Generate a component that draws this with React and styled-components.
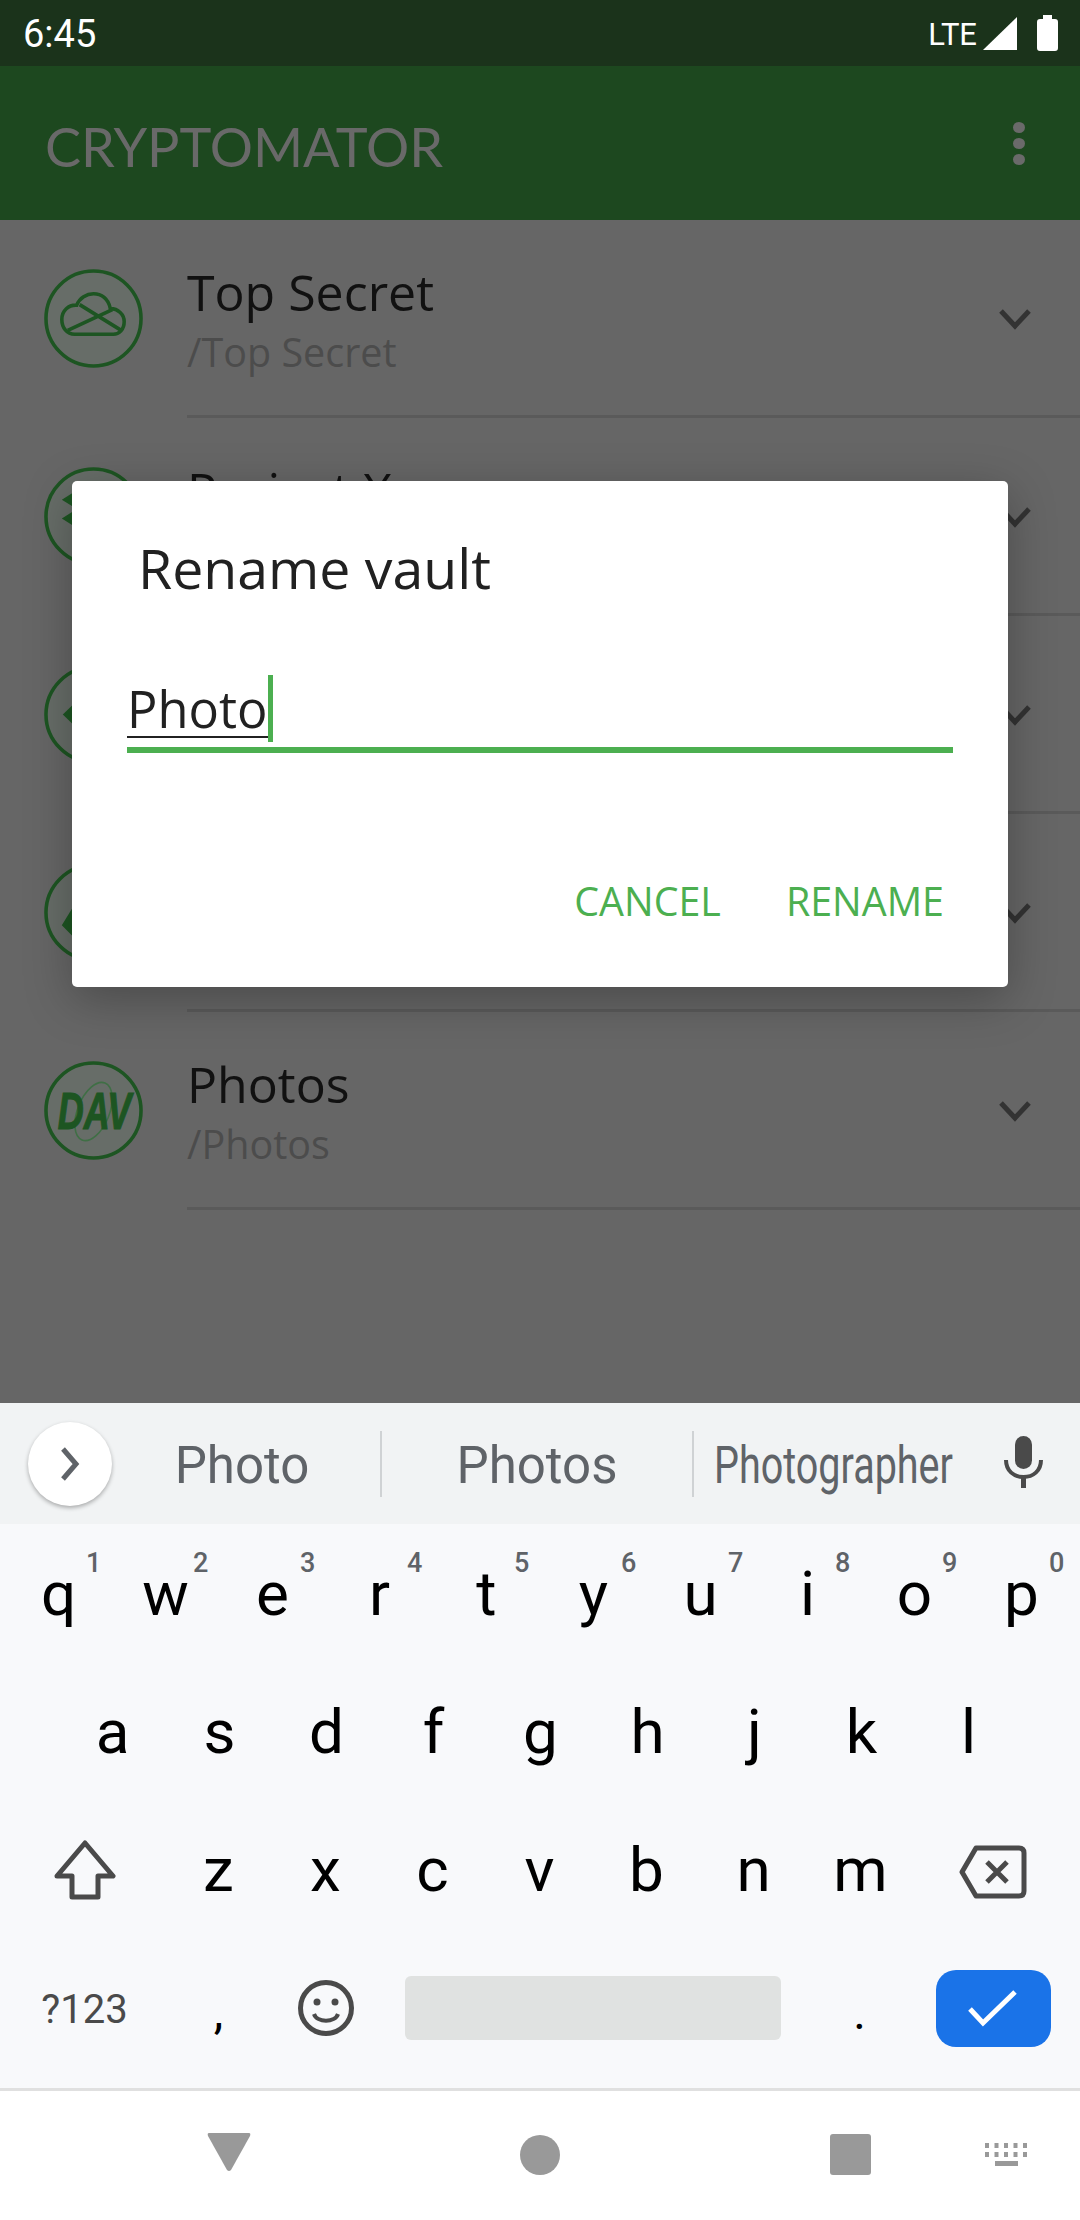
import styled, { createGlobalStyle } from "styled-components";

const Global = createGlobalStyle`
  html, body { margin: 0; padding: 0; background: #666; }
  * { box-sizing: border-box; }
`;

const Screen = styled.div`
  position: relative;
  width: 1080px;
  height: 2220px;
  overflow: hidden;
  display: flex;
  flex-direction: column;
  background: #666666;
  font-family: "Open Sans", sans-serif;
`;

const StatusBar = styled.div`
  height: 66px;
  flex: none;
  background: #1b331b;
  color: #fff;
  display: flex;
  align-items: center;
  padding: 0 22px 0 23px;
  font-family: Roboto, sans-serif;
`;
const Time = styled.span`
  font-size: 38px;
  font-weight: 400;
  flex: 1;
  margin-top: 2px;
`;
const Lte = styled.span`
  font-size: 31px;
  margin: 2px 6px 0 0;
`;

const Toolbar = styled.div`
  height: 154px;
  flex: none;
  background: #1d481f;
  display: flex;
  align-items: center;
  justify-content: space-between;
  padding: 0 55px 0 45px;
`;
const Brand = styled.h1`
  margin: 8px 0 0;
  font: 400 54px/1 Lato, sans-serif;
  color: #696969;
`;
const MoreDots = styled.div`
  display: flex;
  flex-direction: column;
  gap: 5px;
  span {
    width: 12px;
    height: 11px;
    border-radius: 50%;
    background: #6a6a6a;
  }
`;

const List = styled.div`
  height: 1183px;
  flex: none;
`;
const Row = styled.div`
  height: 198px;
  display: flex;
  align-items: stretch;
`;
const VaultIcon = styled.svg`
  width: 99px;
  height: 99px;
  margin: 49px 44px 0 44px;
  flex: none;
  overflow: visible;
`;
const RowBody = styled.div`
  flex: 1;
  display: flex;
  align-items: center;
  justify-content: space-between;
  padding-right: 48px;
  border-bottom: 3px solid #5a5a5a;
`;
const RowText = styled.div`
  margin-top: 5px;
`;
const RowTitle = styled.div`
  font-size: 50px;
  line-height: 60px;
  color: #111;
`;
const RowPath = styled.div`
  font-size: 39.5px;
  line-height: 54px;
  min-height: 54px;
  margin-top: 3px;
  color: #4c4c4c;
`;
const Chevron = styled.svg`
  width: 34px;
  height: 22px;
  margin-top: 2px;
`;

const Dialog = styled.div`
  position: absolute;
  left: 72px;
  top: 481px;
  width: 936px;
  height: 506px;
  background: #fff;
  border-radius: 5px;
  box-shadow: 0 12px 48px rgba(0, 0, 0, 0.28);
  padding: 51px 55px 0;
`;
const DialogTitle = styled.h2`
  margin: 0 0 0 11px;
  font-size: 55.4px;
  line-height: 72px;
  font-weight: 400;
  color: #212121;
`;
const Field = styled.div`
  margin-top: 68px;
  height: 81px;
  border-bottom: 6px solid #4caf50;
  display: flex;
  align-items: flex-start;
`;
const FieldText = styled.span`
  font-size: 50.6px;
  line-height: 62px;
  height: 66px;
  padding: 6px 1px 0 0;
  color: #212121;
  border-bottom: 2px solid #212121;
`;
const Caret = styled.span`
  width: 5px;
  height: 67px;
  margin-top: 3px;
  background: #4caf50;
`;
const DialogActions = styled.div`
  display: flex;
  justify-content: flex-end;
  gap: 65px;
  margin-top: 123px;
  padding-right: 9px;
`;
const DialogButton = styled.span`
  font-size: 39.4px;
  line-height: 50px;
  color: #4caf50;
`;

const Keyboard = styled.div`
  height: 685px;
  flex: none;
  background: #f8f9fb;
`;
const SuggestStrip = styled.div`
  position: relative;
  height: 121px;
  background: #f1f3f4;
  display: flex;
  align-items: center;
  font-family: Roboto, sans-serif;
  font-size: 51px;
  color: #5f6368;
`;
const ExpandButton = styled.div`
  width: 84px;
  height: 84px;
  border-radius: 50%;
  margin-left: 28px;
  background: #fff;
  box-shadow: 0 2px 4px rgba(0, 0, 0, 0.3);
  display: flex;
  align-items: center;
  justify-content: center;
  flex: none;
`;
const Suggestion = styled.div`
  width: ${(p) => p.$w}px;
  height: 66px;
  line-height: 70px;
  text-align: ${(p) => (p.$left ? "left" : "center")};
  padding-left: ${(p) => (p.$left ? 20 : 0)}px;
  padding-right: ${(p) => p.$shift || 0}px;
  flex: none;
  border-right: ${(p) => (p.$sep ? "2px solid #cfd2d4" : "none")};
`;
const Squeezed = styled.span`
  display: inline-block;
  transform: scaleX(0.775);
  transform-origin: left center;
  white-space: nowrap;
`;
const MicIcon = styled.svg`
  position: absolute;
  left: 1004px;
  top: 33px;
  width: 39px;
  height: 52px;
`;

const KeyRows = styled.div`
  padding: 1px 3px 0 5px;
`;
const KeyRow = styled.div`
  height: 138px;
  display: grid;
  grid-template-columns: ${(p) => p.$cols};
  padding-left: ${(p) => p.$pad || 0}px;
  margin-left: ${(p) => p.$back || 0}px;
  align-items: center;
  justify-items: center;
`;
const Key = styled.div`
  position: relative;
  width: 100%;
  text-align: center;
  font-family: Roboto, sans-serif;
  font-size: ${(p) => p.$size || 62}px;
  line-height: 70px;
  margin-top: ${(p) => p.$mt || 0}px;
  color: #000;
`;
const Digit = styled.span`
  position: absolute;
  left: 81px;
  top: -9px;
  font-size: 27px;
  line-height: 27px;
  font-weight: 500;
  color: #5f6368;
`;
const SymbolKey = styled.div`
  font-family: Roboto, sans-serif;
  font-size: 40px;
  color: #4a4a4a;
  margin-top: 3px;
`;
const SpaceBar = styled.div`
  width: 376px;
  height: 64px;
  border-radius: 6px;
  background: #e0e2e1;
`;
const EnterKey = styled.div`
  width: 115px;
  height: 77px;
  border-radius: 20px;
  background: #1a73e8;
  margin-right: 3px;
  display: flex;
  align-items: center;
  justify-content: center;
`;
const KeyIcon = styled.svg`
  display: block;
  margin-top: ${(p) => p.$mt || 0}px;
  margin-right: ${(p) => p.$mr || 0}px;
`;

const NavBar = styled.div`
  position: relative;
  height: 132px;
  flex: none;
  background: #fff;
  border-top: 3px solid #e0e0e0;
  display: flex;
  align-items: center;
  padding-left: 207px;
`;
const BackButton = styled.svg`
  width: 44px;
  height: 40px;
  margin-right: 269px;
  margin-top: -8px;
`;
const HomeButton = styled.div`
  width: 40px;
  height: 40px;
  border-radius: 50%;
  background: #999;
  margin-right: 270px;
  margin-top: -1px;
`;
const RecentButton = styled.div`
  width: 41px;
  height: 41px;
  border-radius: 3px;
  background: #999;
  margin-top: -3px;
`;
const KeyboardHide = styled.svg`
  position: absolute;
  left: 985px;
  top: 52px;
  width: 43px;
  height: 23px;
`;

const OneDrive = () => (
  <g fill="none" stroke="#1d5522" strokeWidth="3.6">
    <path d="M31 66C23 66 18 59 18 51 18 42 25 36 33 36.5 36 29 43 25 50 25 58 25 65 30 67 40 75 40 81 46 81 53 81 61 76 66 70 66Z" />
    <path d="M36 36 78 62M24 62 69 41" />
  </g>
);
const Dropbox = () => (
  <path fill="#1d5522" d="M18 33 34 23 50 33 34 43ZM18 52 34 42 50 52 34 62ZM50 33 66 23 82 33 66 43ZM50 52 66 42 82 52 66 62ZM34 66 50 56 66 66 50 76Z" />
);
const Diamond = () => <path fill="#1d5522" d="M19 50 50 20 81 50 50 80Z" />;
const Drive = () => <path fill="#1d5522" d="M18 63 40 27H60L82 63 71 74H29ZM36 60H64L50 37Z" />;
const Dav = () => (
  <g>
    <ellipse cx="50" cy="51" rx="16" ry="31" transform="rotate(22 50 51)" fill="none" stroke="#3f6f45" strokeWidth="1.6" />
    <text x="14" y="69" fontFamily="Liberation Sans, sans-serif" fontWeight="700" fontStyle="italic" fontSize="52" textLength="74" lengthAdjust="spacingAndGlyphs" fill="#1d5522" stroke="#1d5522" strokeWidth="1.2">DAV</text>
  </g>
);

const vaults = [
  { icon: <OneDrive />, title: "Top Secret", path: "/Top Secret" },
  { icon: <Dropbox />, title: "Project X", path: "" },
  { icon: <Diamond />, title: "", path: "" },
  { icon: <Drive />, title: "", path: "" },
  { icon: <Dav />, title: "Photos", path: "/Photos" },
];

const digits = ["1", "2", "3", "4", "5", "6", "7", "8", "9", "0"];

const App = () => (
  <Screen>
    <Global />
    <StatusBar>
      <Time>6:45</Time>
      <Lte>LTE</Lte>
      <svg width="34" height="33" viewBox="0 0 34 33" style={{ marginRight: 20 }}>
        <path d="M34 0V33H0Z" fill="#fff" />
      </svg>
      <svg width="21" height="36" viewBox="0 0 21 36">
        <path d="M6 0H15V4H18Q21 4 21 7V33Q21 36 18 36H3Q0 36 0 33V7Q0 4 3 4H6Z" fill="#fff" />
      </svg>
    </StatusBar>
    <Toolbar>
      <Brand>CRYPTOMATOR</Brand>
      <MoreDots>
        <span />
        <span />
        <span />
      </MoreDots>
    </Toolbar>
    <List>
      {vaults.map((v, i) => (
        <Row key={i}>
          <VaultIcon viewBox="0 0 100 100">
            <circle cx="50" cy="50" r="48" fill="#676d68" stroke="#1d5522" strokeWidth="3.6" />
            {v.icon}
          </VaultIcon>
          <RowBody>
            <RowText>
              <RowTitle>{v.title}</RowTitle>
              <RowPath>{v.path}</RowPath>
            </RowText>
            <Chevron viewBox="0 0 34 22">
              <path d="M3 3 17 18 31 3" fill="none" stroke="#333" strokeWidth="5" />
            </Chevron>
          </RowBody>
        </Row>
      ))}
    </List>
    <Dialog>
      <DialogTitle>Rename vault</DialogTitle>
      <Field>
        <FieldText>Photo</FieldText>
        <Caret />
      </Field>
      <DialogActions>
        <DialogButton>CANCEL</DialogButton>
        <DialogButton>RENAME</DialogButton>
      </DialogActions>
    </Dialog>
    <Keyboard>
      <SuggestStrip>
        <ExpandButton>
          <svg width="20" height="34" viewBox="0 0 20 34">
            <path d="M3 2 16 17 3 32" fill="none" stroke="#5f6368" strokeWidth="5" />
          </svg>
        </ExpandButton>
        <Suggestion $w={270} $sep $shift={8}>Photo</Suggestion>
        <Suggestion $w={312} $sep>Photos</Suggestion>
        <Suggestion $w={260} $left>
          <Squeezed>Photographer</Squeezed>
        </Suggestion>
        <MicIcon viewBox="0 0 39 52">
          <rect x="11" y="0" width="17" height="33" rx="8.5" fill="#4a4a4a" />
          <path d="M2 24C2 35 10 41 19.5 41S37 35 37 24" fill="none" stroke="#4a4a4a" strokeWidth="4" />
          <rect x="17" y="40" width="5" height="12" fill="#4a4a4a" />
        </MicIcon>
      </SuggestStrip>
      <KeyRows>
        <KeyRow $cols="repeat(10, 107px)">
          {"qwertyuiop".split("").map((k, i) => (
            <Key key={k}>
              {k}
              <Digit>{digits[i]}</Digit>
            </Key>
          ))}
        </KeyRow>
        <KeyRow $cols="repeat(9, 107px)" $pad={54}>
          {"asdfghjkl".split("").map((k) => (
            <Key key={k}>{k}</Key>
          ))}
        </KeyRow>
        <KeyRow $cols="161px repeat(7, 107px) 161px" $back={-1}>
          <KeyIcon width="62" height="61" viewBox="0 0 62 61">
            <path d="M31 3 59 36H44V57H18V36H3Z" fill="none" stroke="#4a4a4a" strokeWidth="5" strokeLinejoin="round" />
          </KeyIcon>
          {"zxcvbnm".split("").map((k) => (
            <Key key={k}>{k}</Key>
          ))}
          <KeyIcon width="68" height="54" viewBox="0 0 68 54" $mt={4} $mr={4}>
            <path d="M17 3H60Q65 3 65 8V46Q65 51 60 51H17L3 27Z" fill="none" stroke="#4a4a4a" strokeWidth="5" strokeLinejoin="round" />
            <path d="M28 17 48 37M48 17 28 37" fill="none" stroke="#4a4a4a" strokeWidth="5" />
          </KeyIcon>
        </KeyRow>
        <KeyRow $cols="161px 107px 107px 427px 107px 163px" $back={-1}>
          <SymbolKey>?123</SymbolKey>
          <Key $size={48} $mt={8}>,</Key>
          <KeyIcon width="56" height="56" viewBox="0 0 56 56">
            <circle cx="28" cy="28" r="25.5" fill="none" stroke="#4a4a4a" strokeWidth="5" />
            <circle cx="19" cy="22" r="3.5" fill="#4a4a4a" />
            <circle cx="37" cy="22" r="3.5" fill="#4a4a4a" />
            <path d="M16 34C19 43 37 43 40 34" fill="none" stroke="#4a4a4a" strokeWidth="4" />
          </KeyIcon>
          <SpaceBar />
          <Key $size={48} $mt={9}>.</Key>
          <EnterKey>
            <svg width="50" height="38" viewBox="0 0 50 38">
              <path d="M2 20 15 34 47 3" fill="none" stroke="#fff" strokeWidth="5" />
            </svg>
          </EnterKey>
        </KeyRow>
      </KeyRows>
    </Keyboard>
    <NavBar>
      <BackButton viewBox="0 0 44 40">
        <path d="M2 1H42Q44 1 43 4L24 38Q22 40 20 38L1 4Q0 1 2 1Z" fill="#999" />
      </BackButton>
      <HomeButton />
      <RecentButton />
      <KeyboardHide viewBox="0 0 43 23">
        <g fill="#999">
          {[0, 9.5, 19, 28.5, 38].map((x) => (
            <rect key={x} x={x} y="0" width="4" height="5" />
          ))}
          {[0, 9.5, 19, 28.5, 38].map((x) => (
            <rect key={x} x={x} y="9" width="4" height="5" />
          ))}
          <rect x="10" y="18" width="23" height="5" />
        </g>
      </KeyboardHide>
    </NavBar>
  </Screen>
);

export default App;
